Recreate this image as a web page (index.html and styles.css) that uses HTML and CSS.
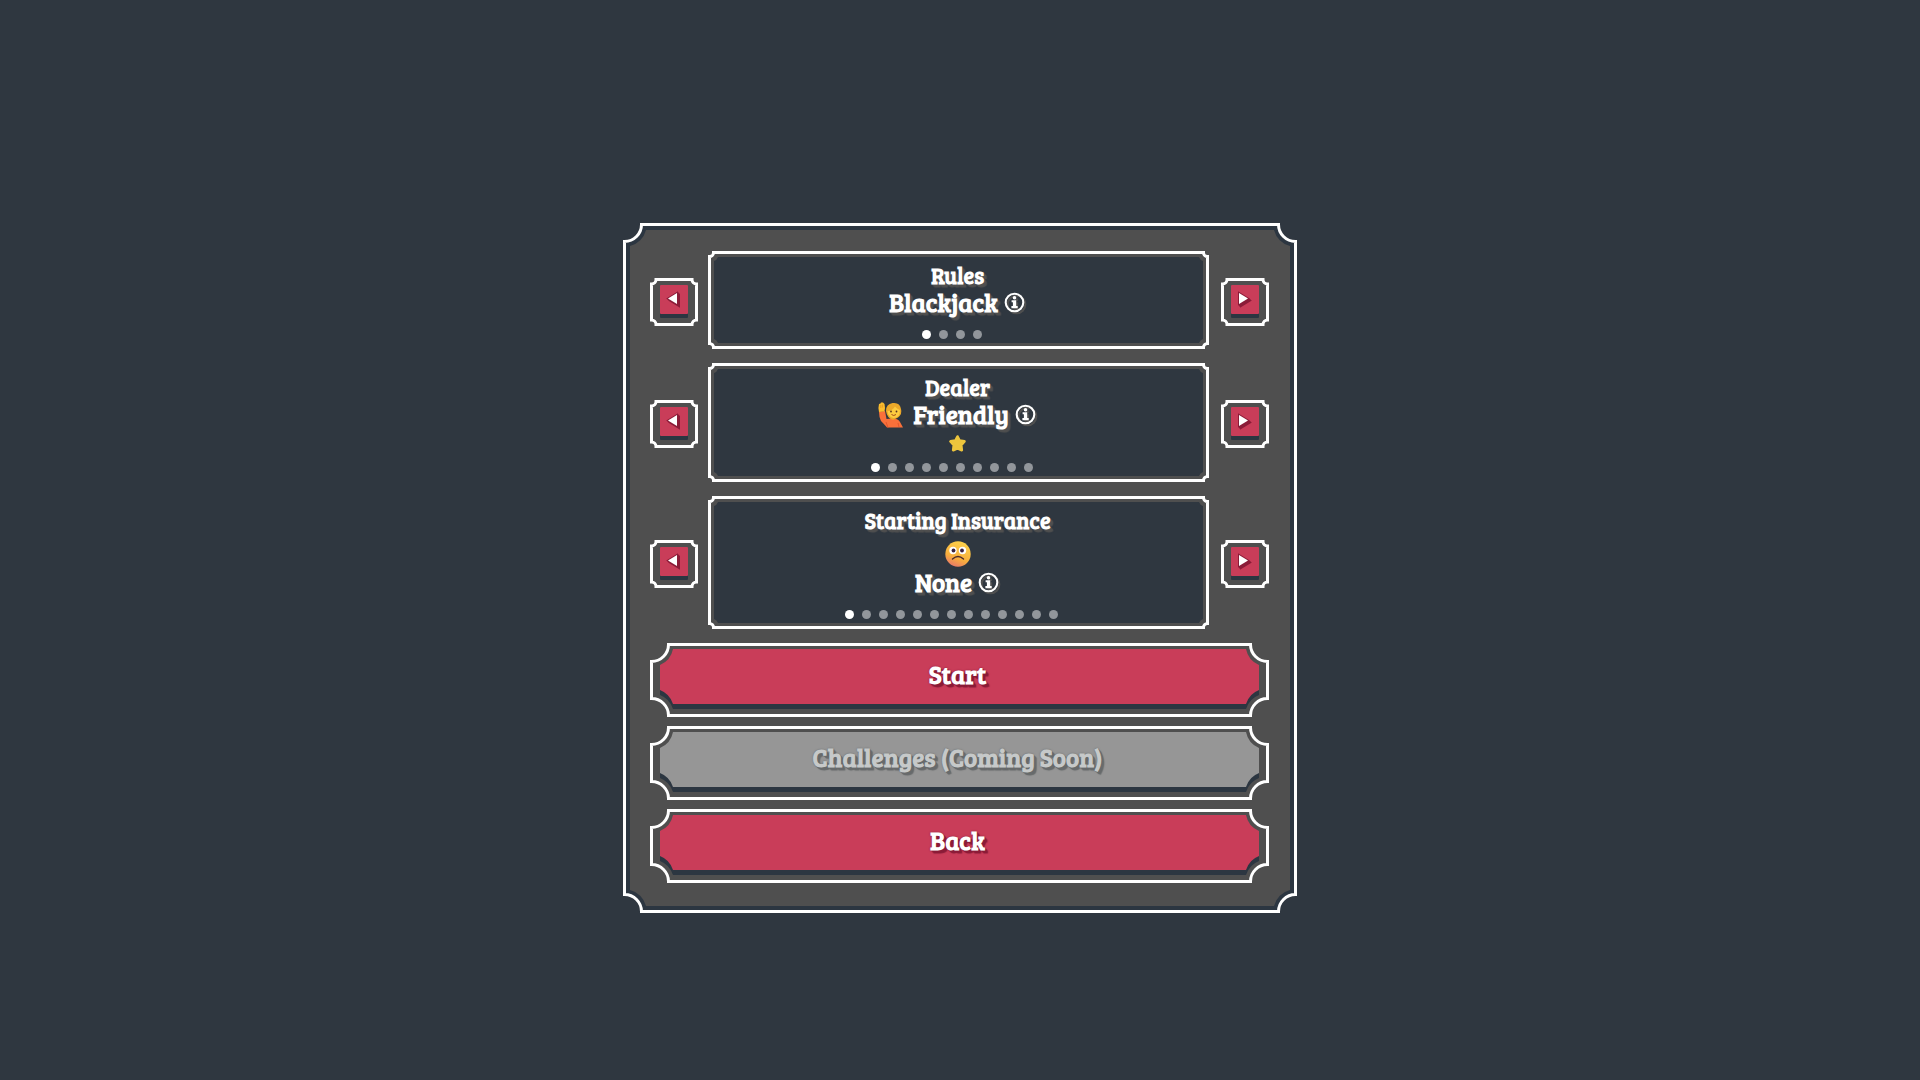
FILE: index.html
```html
<!DOCTYPE html>
<html lang="en">
<head>
    <meta charset="UTF-8">
    <meta name="viewport" content="width=device-width, initial-scale=1.0">
    <title>Blackjack</title>
    <link rel="stylesheet" href="styles.css">
</head>
<body>
    <svg class="sprites" aria-hidden="true">
        <symbol id="info" viewBox="0 0 22 22">
            <circle cx="10.500" cy="10.500" r="8.800" fill="none" stroke="currentColor" stroke-width="2.100"/>
            <circle cx="10.500" cy="5.800" r="1.800" fill="currentColor"/>
            <path d="M7.600 8.200h4.600v5.800h1.500v2.200H7.400v-2.200h1.500v-3.700H7.600z" fill="currentColor"/>
        </symbol>
        <symbol id="prev" viewBox="0 0 18 18">
            <path d="M3 7.500 12 2v11z M5 9.500 14 4v11z M4 8.500 13 3v11z" fill="#8b1c38" stroke="#8b1c38" stroke-width="2"/>
            <path d="M3 7.500 12 2v11z" fill="#fff"/>
        </symbol>
        <symbol id="next" viewBox="0 0 18 18">
            <path d="M12 7.500 3 2v11z M14 9.500 5 4v11z M13 8.500 4 3v11z" fill="#8b1c38" stroke="#8b1c38" stroke-width="2"/>
            <path d="M12 7.500 3 2v11z" fill="#fff"/>
        </symbol>
    </svg>

    <main>
        <form class="panel">
            <div class="row">
                <button type="button" class="arrow" aria-label="Previous rules"><svg><use href="#prev"/></svg></button>
                <section class="box">
                    <h2>Rules</h2>
                    <p class="value">Blackjack <svg class="info"><use href="#info"/></svg></p>
                    <div class="dots"><i class="on"></i><i></i><i></i><i></i></div>
                </section>
                <button type="button" class="arrow" aria-label="Next rules"><svg><use href="#next"/></svg></button>
            </div>

            <div class="row">
                <button type="button" class="arrow" aria-label="Previous dealer"><svg><use href="#prev"/></svg></button>
                <section class="box">
                    <h2>Dealer</h2>
                    <p class="value">
                        <svg class="emoji hand" viewBox="0 0 26 26">
                            <path d="M1 10 7 9 8.500 17 14 16.500Q20 16 22 20L25 25.500H9Q6 22 3 19Q1 15 1 10z" fill="#f9703a"/>
                            <path d="M8 20 10 25.500M20 21 21 25" stroke="#e0562f" fill="none"/>
                            <path d="M1 10Q0 5 1 2L2.500 1.500 3 .5H5L6.500 2 7 6 6.500 9.500z" fill="#fbbd2e"/>
                            <path d="M2.800 3v3M4.600 2.500v3" stroke="#d98c20" stroke-width=".6"/>
                            <path d="M8 9Q8 2 14.500 1Q22 0 23 7Q24.500 12 20 15.500L15 18Q9 16 8 9z" fill="#eba829"/>
                            <path d="M9.500 9Q14 9 17 4.500Q19 7 22 8Q22 16 15.500 16Q10 15 9.500 9z" fill="#fdcb3f"/>
                            <circle cx="13" cy="9.500" r=".9" fill="#59351c"/>
                            <circle cx="18.500" cy="9.500" r=".9" fill="#59351c"/>
                            <path d="M13.500 12.500Q15.800 14.500 18 12.500" fill="none" stroke="#a34e1d"/>
                        </svg>
                        Friendly <svg class="info"><use href="#info"/></svg>
                    </p>
                    <svg class="star" viewBox="0 0 17 17">
                        <path d="M8.500 1.500 10.600 5.600 15.500 6.400 12.200 10 12.800 15.200 8.500 13.200 4.200 15.200 4.800 10 1.500 6.400 6.400 5.600z" fill="#edc53d" stroke="#edc53d" stroke-width="2.600" stroke-linejoin="round"/>
                    </svg>
                    <div class="dots"><i class="on"></i><i></i><i></i><i></i><i></i><i></i><i></i><i></i><i></i><i></i></div>
                </section>
                <button type="button" class="arrow" aria-label="Next dealer"><svg><use href="#next"/></svg></button>
            </div>

            <div class="row">
                <button type="button" class="arrow" aria-label="Previous insurance"><svg><use href="#prev"/></svg></button>
                <section class="box">
                    <h2>Starting Insurance</h2>
                    <svg class="emoji face" viewBox="0 0 26 26">
                        <defs>
                            <linearGradient id="skin" x1=".7" y1="0" x2=".3" y2="1">
                                <stop offset="0" stop-color="#fdd34b"/>
                                <stop offset=".65" stop-color="#f8ae3d"/>
                                <stop offset="1" stop-color="#e8776b"/>
                            </linearGradient>
                        </defs>
                        <circle cx="13" cy="13" r="12.700" fill="url(#skin)"/>
                        <circle cx="8" cy="9.500" r="3.700" fill="#fff"/>
                        <circle cx="17.500" cy="9.500" r="3.700" fill="#fff"/>
                        <circle cx="8.500" cy="9.500" r="1.900" fill="#3a2340"/>
                        <circle cx="17" cy="9.500" r="1.900" fill="#3a2340"/>
                        <path d="M7.500 18Q13 13 18.500 18" fill="none" stroke="#4c2a2c" stroke-width="1.400" stroke-linecap="round"/>
                    </svg>
                    <p class="value">None <svg class="info"><use href="#info"/></svg></p>
                    <div class="dots"><i class="on"></i><i></i><i></i><i></i><i></i><i></i><i></i><i></i><i></i><i></i><i></i><i></i><i></i></div>
                </section>
                <button type="button" class="arrow" aria-label="Next insurance"><svg><use href="#next"/></svg></button>
            </div>

            <div class="actions">
                <button type="button" class="action">Start</button>
                <button type="button" class="action" disabled>Challenges (Coming Soon)</button>
                <button type="button" class="action">Back</button>
            </div>
        </form>
    </main>
</body>
</html>
```
FILE: styles.css
```css
* {
    box-sizing: border-box;
}
body {
    margin: 0;
    background-color: #2f3740;
    color: #fff;
    font-family: "Bree Serif", "DejaVu Serif Condensed", "DejaVu Serif", serif;
}
main {
    display: flex;
    justify-content: center;
    align-items: center;
    min-height: 100vh;
    padding-top: 56px;
}
.sprites {
    display: none;
}

/* frames: the notched corners are the slices of the border image */
.panel {
    width: 100%;
    max-width: 674px;
    display: flex;
    flex-direction: column;
    gap: 14px;
    padding: 25px 25px 27px 24px;
    border: 3px solid transparent;
    border-image: url("data:image/svg+xml,%3Csvg xmlns='http://www.w3.org/2000/svg' width='72' height='72'%3E%3Cpath d='M18.5 1.5H53.5A17 17 0 0 0 70.5 18.5V53.5A17 17 0 0 0 53.5 70.5H18.5A17 17 0 0 0 1.5 53.5V18.5A17 17 0 0 0 18.5 1.5Z' fill='%232c3641' stroke='%23fff' stroke-width='3'/%3E%3Cpath d='M23 7H49A22 22 0 0 0 65 23V49A22 22 0 0 0 49 65H23A22 22 0 0 0 7 49V23A22 22 0 0 0 23 7Z' fill='%234f4f4f'/%3E%3C/svg%3E") 28 fill / 28px stretch;
}
.box {
    flex: 1;
    display: flex;
    flex-direction: column;
    align-items: center;
    margin-right: 2px;
    padding: 8px 2px 7px 0;
    border: 3px solid transparent;
    border-image: url("data:image/svg+xml,%3Csvg xmlns='http://www.w3.org/2000/svg' width='36' height='36'%3E%3Cpath d='M5.5 1.5H30.5A4 4 0 0 0 34.5 5.5V30.5A4 4 0 0 0 30.5 34.5H5.5A4 4 0 0 0 1.5 30.5V5.5A4 4 0 0 0 5.5 1.5Z' fill='%234f4f4f' stroke='%23fff' stroke-width='3'/%3E%3Cpath d='M10 6H26Q27 9 30 10V26Q27 27 26 30H10Q9 27 6 26V10Q9 9 10 6Z' fill='%232f3740'/%3E%3C/svg%3E") 12 fill / 12px stretch;
}
.row {
    display: flex;
    align-items: center;
    gap: 10px;
}

h2,
.value {
    margin: 0;
    font-weight: bold;
    line-height: 27px;
    text-shadow: 1px 1px #4f4f4f, 2px 2px #4f4f4f, 3px 3px 1px #4f4f4f;
}
h2 {
    font-size: 22px;
}
.value {
    display: flex;
    align-items: center;
    gap: 6px;
    font-size: 25px;
}
.info {
    width: 22px;
    height: 22px;
    filter: drop-shadow(2px 2px #4f4f4f);
}
.emoji {
    width: 26px;
    height: 26px;
}
.hand {
    margin-right: 3px;
}
.face {
    margin: 7px 0 2px;
}
.star {
    width: 17px;
    height: 17px;
    margin-top: 7px;
    margin-bottom: -3px;
}
.dots {
    display: flex;
    gap: 8px;
    margin-top: 14px;
    padding-right: 12px;
}
.dots i {
    width: 9px;
    height: 9px;
    border-radius: 50%;
    background-color: #92969b;
}
.dots .on {
    background-color: #fff;
}

button {
    color: #fff;
    font: inherit;
    cursor: pointer;
}
.arrow {
    width: 48px;
    height: 48px;
    display: flex;
    justify-content: center;
    align-items: center;
    margin-top: 3px;
    padding: 0 0 4px;
    border: 3px solid transparent;
    background: none;
    border-image: url("data:image/svg+xml,%3Csvg xmlns='http://www.w3.org/2000/svg' width='48' height='48'%3E%3Cpath d='M6 1.5H42A4.5 4.5 0 0 0 46.5 6V42A4.5 4.5 0 0 0 42 46.5H6A4.5 4.5 0 0 0 1.5 42V6A4.5 4.5 0 0 0 6 1.5Z' fill='%234f4f4f' stroke='%23fff' stroke-width='3'/%3E%3Crect x='10' y='12' width='28' height='28' rx='1' fill='%232c3641'/%3E%3Crect x='10' y='7' width='28' height='29' rx='1' fill='%23c93d59'/%3E%3C/svg%3E") 20 fill / 20px stretch;
}
.arrow svg {
    width: 18px;
    height: 18px;
}
.actions {
    display: flex;
    flex-direction: column;
    gap: 9px;
}
.action {
    height: 74px;
    padding: 0 4px 12px 0;
    border: 3px solid transparent;
    background: none;
    font-size: 25px;
    font-weight: bold;
    text-shadow: 0 0 2px #8b1c38, 1px 1px #8b1c38, 2px 2px #8b1c38, 3px 3px 1px #8b1c38;
    border-image: url("data:image/svg+xml,%3Csvg xmlns='http://www.w3.org/2000/svg' width='74' height='74'%3E%3Cpath d='M18.5 1.5H55.5A17 17 0 0 0 72.5 18.5V55.5A17 17 0 0 0 55.5 72.5H18.5A17 17 0 0 0 1.5 55.5V18.5A17 17 0 0 0 18.5 1.5Z' fill='%234f4f4f' stroke='%23fff' stroke-width='3'/%3E%3Cpath d='M23 11H51A22 22 0 0 0 64 27V52A22 22 0 0 0 51 66H23A22 22 0 0 0 10 52V27A22 22 0 0 0 23 11Z' fill='%232c3641'/%3E%3Cpath d='M23 6H51A22 22 0 0 0 64 22V47A22 22 0 0 0 51 61H23A22 22 0 0 0 10 47V22A22 22 0 0 0 23 6Z' fill='%23c93d59'/%3E%3C/svg%3E") 28 fill / 28px stretch;
}
.action:disabled {
    color: #c6c9c9;
    cursor: default;
    text-shadow: 0 0 2px #686b6c, 1px 1px #686b6c, 2px 2px #686b6c, 3px 3px 1px #686b6c;
    border-image-source: url("data:image/svg+xml,%3Csvg xmlns='http://www.w3.org/2000/svg' width='74' height='74'%3E%3Cpath d='M18.5 1.5H55.5A17 17 0 0 0 72.5 18.5V55.5A17 17 0 0 0 55.5 72.5H18.5A17 17 0 0 0 1.5 55.5V18.5A17 17 0 0 0 18.5 1.5Z' fill='%234f4f4f' stroke='%23fff' stroke-width='3'/%3E%3Cpath d='M23 11H51A22 22 0 0 0 64 27V52A22 22 0 0 0 51 66H23A22 22 0 0 0 10 52V27A22 22 0 0 0 23 11Z' fill='%232c3641'/%3E%3Cpath d='M23 6H51A22 22 0 0 0 64 22V47A22 22 0 0 0 51 61H23A22 22 0 0 0 10 47V22A22 22 0 0 0 23 6Z' fill='%23969696'/%3E%3C/svg%3E");
}
```
